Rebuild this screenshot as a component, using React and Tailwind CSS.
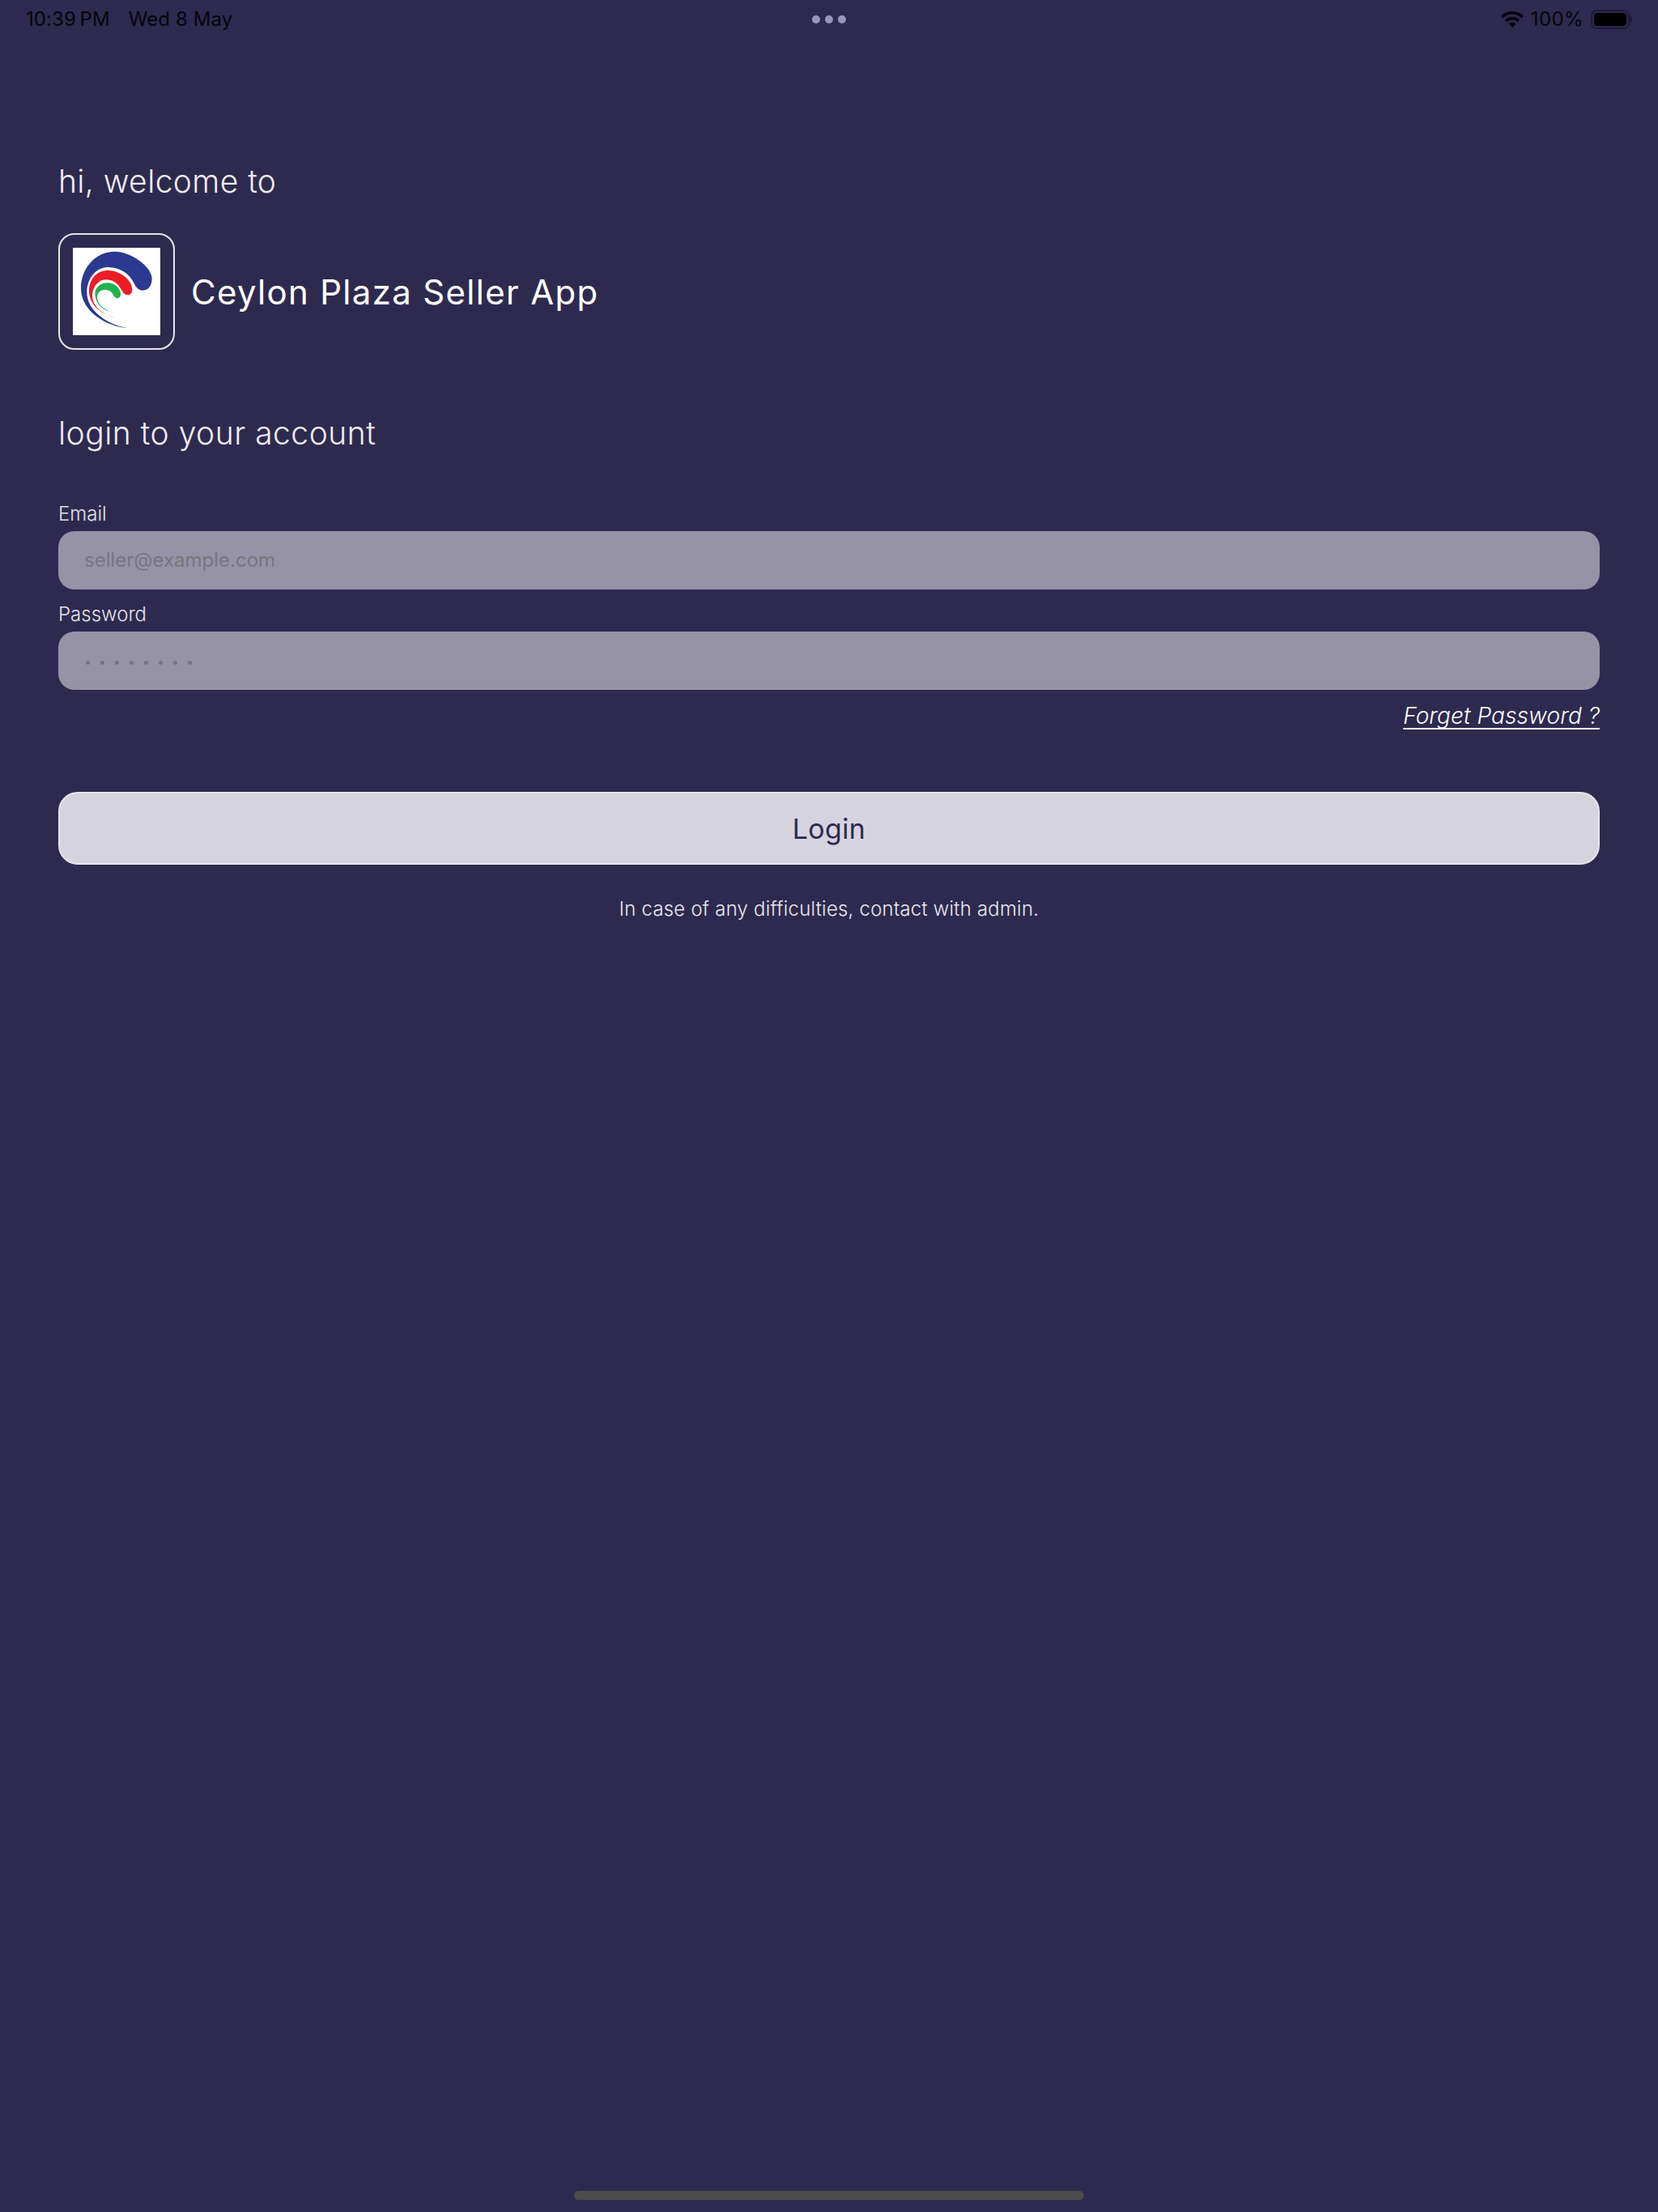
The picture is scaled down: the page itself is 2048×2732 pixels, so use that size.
import React from "react";

const Logo = () => (
  <svg viewBox="0 0 324 324" className="w-[108px] h-[108px] bg-white block">
    <path fill="#2b3990" d="M200 297C130 292 30 240 30 150C30 75 85 14 155 14C215 14 293 70 293 115C293 140 280 158 260 158C240 158 232 142 225 128C210 98 175 72 130 72C85 72 52 115 52 165C52 235 130 285 200 297Z" />
    <path fill="#ed1c24" d="M165 260C110 252 60 215 60 160C60 115 90 84 130 84C175 84 220 120 220 155C220 168 212 175 202 175C190 175 182 160 175 148C165 130 145 118 122 118C95 118 72 145 72 178C72 220 115 252 165 260Z" />
    <path fill="#22b24c" d="M142 237C105 232 82 200 82 170C82 148 102 130 128 130C155 130 177 150 177 172C177 182 171 187 164 187C155 187 152 175 145 167C138 158 128 155 118 155C102 155 90 168 90 183C90 208 115 230 142 237Z" />
  </svg>
);

const Field = ({ label, children }) => (
  <div>
    <div className="text-[24px] leading-[32px] text-[#e3e2e9] font-light">{label}</div>
    <div className="mt-[5px] h-[72px] rounded-[20px] bg-[#9693a7] pl-[32px] flex items-center text-[24px] text-[#77777d] font-normal">
      {children}
    </div>
  </div>
);

export default function App() {
  return (
    <div className="min-h-[2732px] flex flex-col bg-[#2e2a4f] font-['Inter',sans-serif]">
      <div className="h-[48px] flex items-center px-[32px] text-[24px] text-[#05050c]">
        <div className="flex-1 flex gap-[23px] tracking-[0.1px]">
          <span>10:39&#8201;PM</span>
          <span>Wed 8 May</span>
        </div>
        <div className="flex gap-[6px]">
          <div className="w-[10px] h-[10px] rounded-full bg-[#9a95bf]" />
          <div className="w-[10px] h-[10px] rounded-full bg-[#9a95bf]" />
          <div className="w-[10px] h-[10px] rounded-full bg-[#9a95bf]" />
        </div>
        <div className="flex-1 flex items-center justify-end gap-[9px]">
          <svg viewBox="0 0 28 20" className="w-[28px] h-[20px]">
            <path fill="#05050c" d="M14 0C8.500 0 3.600 2.200 0 5.800L2.500 8.400C5.400 5.500 9.500 3.600 14 3.600C18.500 3.600 22.600 5.500 25.500 8.400L28 5.800C24.400 2.200 19.500 0 14 0Z" />
            <path fill="#05050c" d="M14 6.800C10.400 6.800 7.200 8.200 4.800 10.600L7.300 13.200C9 11.500 11.400 10.400 14 10.400C16.600 10.400 19 11.500 20.700 13.200L23.200 10.600C20.800 8.200 17.600 6.800 14 6.800Z" />
            <path fill="#05050c" d="M14 13.600C12.300 13.600 10.800 14.300 9.700 15.400L14 20L18.300 15.400C17.200 14.300 15.700 13.600 14 13.600Z" />
          </svg>
          <span className="tracking-[0.4px]">100%</span>
          <div className="flex items-center">
            <div className="w-[48px] h-[24px] rounded-[7px] border-2 border-[#1e1b3a] p-[2px]">
              <div className="h-full rounded-[4px] bg-black" />
            </div>
            <div className="w-[3px] h-[8px] rounded-r-[2px] bg-[#1e1b3a]" />
          </div>
        </div>
      </div>

      <div className="px-[72px] pt-[152px]">
        <div className="text-[39px] leading-[48px] font-light text-[#eeedf2] tracking-[0.4px]">hi, welcome to</div>

        <div className="mt-[40px] flex items-center gap-[20px]">
          <div className="w-[144px] h-[144px] rounded-[20px] border-2 border-[#e6e6ea] flex items-center justify-center">
            <Logo />
          </div>
          <div className="text-[42px] font-normal text-white tracking-[1.3px]">Ceylon Plaza Seller App</div>
        </div>

        <div className="mt-[79px] text-[39px] leading-[48px] font-light text-[#eeedf2] tracking-[0.5px]">login to your account</div>

        <div className="mt-[60px] flex flex-col gap-[15px]">
          <Field label="Email">seller@example.com</Field>
          <Field label="Password">
            <div className="flex gap-[13px] pl-[2px] pt-[4px]">
              {[0, 1, 2, 3, 4, 5, 6, 7].map((i) => (
                <div key={i} className="w-[5px] h-[5px] rounded-full bg-[#77777d]" />
              ))}
            </div>
          </Field>
        </div>

        <div className="mt-[15px] flex justify-end">
          <a className="text-[28px] leading-[34px] font-light italic text-white underline underline-offset-[5px] [text-decoration-skip-ink:none] tracking-[0.1px]">Forget Password ?</a>
        </div>

        <button className="mt-[77px] w-full h-[90px] rounded-[24px] border-2 border-[#e4e4e8] bg-[#d5d4de] text-[34px] font-normal text-[#2e2a4f] tracking-[0.3px]">
          Login
        </button>

        <div className="mt-[38px] text-center text-[24px] leading-[34px] font-light text-[#e9e8ee] tracking-[0.2px]">
          In case of any difficulties, contact with admin.
        </div>
      </div>

      <div className="mt-auto mb-[15px] mx-auto w-[630px] h-[11px] rounded-full bg-[#4c4c4c]" />
    </div>
  );
}
